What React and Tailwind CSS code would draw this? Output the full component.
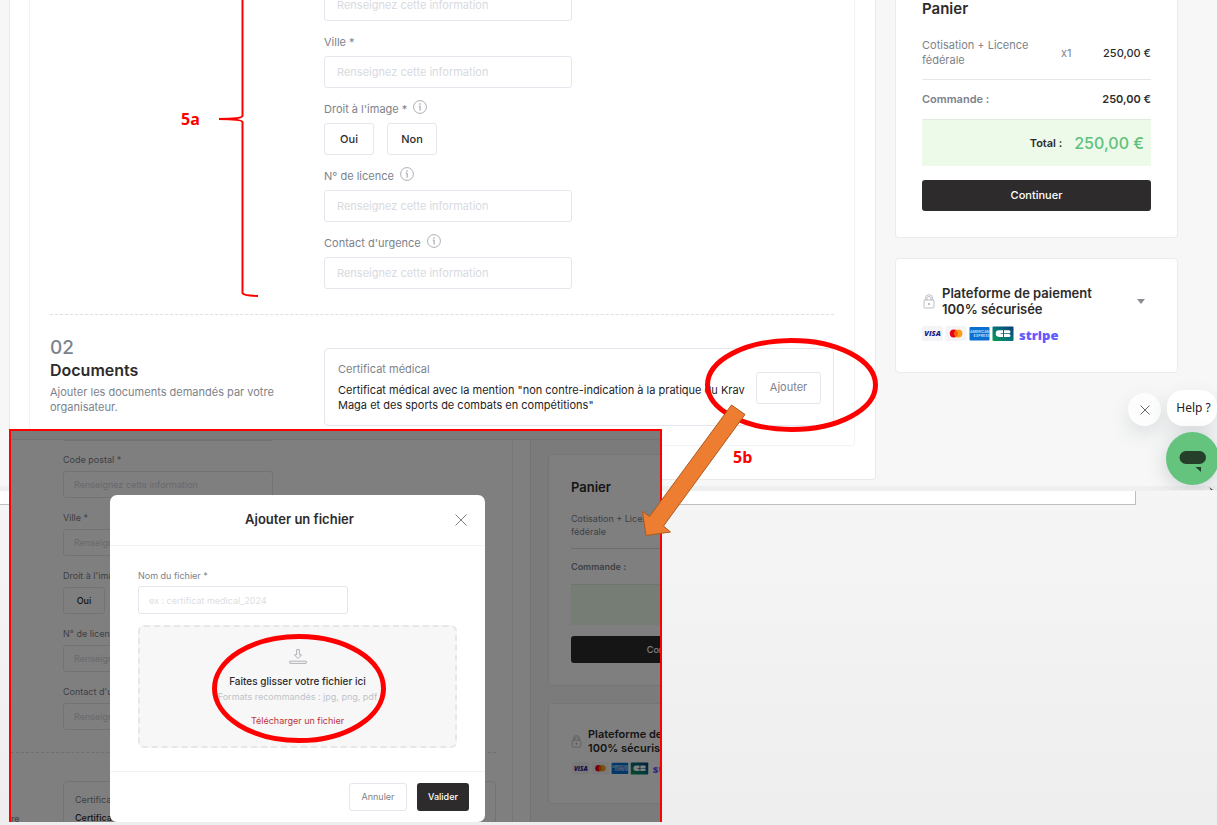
import { useId } from 'react';

const INFO = 'Renseignez cette information';

function InfoIcon() {
  return (
    <svg viewBox="0 0 14 14" className="mb-1 h-[14px] w-[14px] text-[#979ba3]" fill="none" stroke="currentColor" aria-hidden="true">
      <circle cx="7" cy="7" r="6.4" strokeWidth="0.8" />
      <path d="M5.8 6.1h1.3V10.600" strokeWidth="1" />
      <circle cx="7" cy="4" r="0.5" fill="currentColor" strokeWidth="0.4" />
    </svg>
  );
}

function LockIcon({ className }) {
  return (
    <svg viewBox="0 0 12 15" className={className} fill="none" stroke="#aaadb4" strokeWidth="0.8" aria-hidden="true">
      <path d="M2.4 6V4.3a3.6 3.6 0 0 1 7.2 0V6M4 6V4.5a2 2 0 0 1 4 0V6" />
      <rect x="1" y="6" width="10" height="8" rx="1" />
      <circle cx="6" cy="10" r="0.7" fill="#9b9fa6" />
    </svg>
  );
}

function PaymentLogos({ className }) {
  return (
    <svg viewBox="0 0 144 18" className={className} role="img" aria-label="Visa, Mastercard, American Express, CB, Stripe">
      <defs>
        <linearGradient id="cb" x1="0" x2="1" y1="1" y2="0">
          <stop offset="0" stopColor="#0a9a50" />
          <stop offset="0.5" stopColor="#04707c" />
          <stop offset="1" stopColor="#073c72" />
        </linearGradient>
      </defs>
      <rect x="0" y="0" width="21" height="15" rx="2" fill="#f4f4f6" />
      <text x="10.5" y="10.2" textAnchor="middle" fontFamily="Open Sans, sans-serif" fontSize="7.500" fontWeight="800" fontStyle="italic" fill="#1a1f87">VISA</text>
      <rect x="23.5" y="0" width="21" height="15" rx="2" fill="#f4f4f6" />
      <circle cx="31.8" cy="7.5" r="4" fill="#eb001b" />
      <circle cx="36.4" cy="7.5" r="4" fill="#f79e1b" />
      <path d="M34.1 4.2a4 4 0 0 1 0 6.6a4 4 0 0 1 0-6.6" fill="#ff5f00" />
      <rect x="47.5" y="1" width="20" height="13.5" rx="1" fill="#0a6fd0" />
      <text x="48" y="7" fontFamily="Inter, sans-serif" fontSize="3.6" fontWeight="700" fill="#b9d8f6">AMERICAN</text>
      <text x="51.5" y="11" fontFamily="Inter, sans-serif" fontSize="3.6" fontWeight="700" fill="#b9d8f6">EXPRESS</text>
      <rect x="70.5" y="0.5" width="21" height="14.5" rx="1" fill="url(#cb)" />
      <path d="M81 4.300h-4a3.300 3.300 0 0 0 0 6.600H81V8.100h-2.500v-.9h2.500zM82 4.300h5a1.500 1.500 0 0 1 0 3h-5zM82 7.900h5a1.500 1.500 0 0 1 0 3h-5z" fill="#fff" />
      <text x="97" y="13.5" fontFamily="Open Sans, sans-serif" fontSize="13" fontWeight="800" fill="#635bff">stripe</text>
    </svg>
  );
}

function Field({ label, info, small }) {
  const id = useId();
  return (
    <div>
      <div className={small ? 'flex h-[31px] items-center pt-[9px]' : 'flex h-[35px] items-center gap-[6px] pt-[7px]'}>
        <label htmlFor={id} className="text-[#7d828b]">{label}</label>
        {info && <InfoIcon />}
      </div>
      <input
        id={id}
        placeholder={INFO}
        className={
          small
            ? 'block h-[27px] w-[210px] rounded-[3px] border border-[#e4e6ed] bg-white px-[10px] placeholder:text-[#cfd2da]'
            : 'block h-8 w-[248px] rounded-[3px] border border-[#e4e6ed] bg-white px-3 placeholder:text-[#d8dae1]'
        }
      />
    </div>
  );
}

function ImageRights({ small }) {
  const button = small
    ? 'h-[27px] w-[42px] rounded-[3px] border border-[#e4e6ed] bg-white font-medium text-[#2d2b2c]'
    : 'h-8 w-[50px] rounded-[3px] border border-[#e4e6ed] bg-white font-medium text-[#2d2b2c]';
  return (
    <div>
      <div className={small ? 'flex h-[31px] items-center pt-[9px]' : 'flex h-[35px] items-center gap-[6px] pt-[7px]'}>
        <span className="text-[#7d828b]">Droit à l'image *</span>
        {!small && <InfoIcon />}
      </div>
      <div className="flex gap-[13px]">
        <button className={button}>Oui</button>
        <button className={button}>Non</button>
      </div>
    </div>
  );
}

function RegistrationForm() {
  return (
    <main className="min-w-0 flex-1 rounded-b border-r border-b border-l border-[#e9eaed] bg-white pr-5 pb-[33px] pl-[19px]">
      <div className="rounded-b border-x border-b border-[#f3f3f5] px-5 pb-[19px]">
        <div className="flex">
          <div className="w-[274px] shrink-0" />
          <div className="-mt-[46px]">
            <Field label="Code postal *" />
            <Field label="Ville *" />
            <ImageRights />
            <Field label="N° de licence" info />
            <Field label="Contact d'urgence" info />
          </div>
        </div>
        <div className="mt-[25px] border-t border-dashed border-[#dddfe3]" />
        <section className="flex pt-[21px]">
          <div className="w-[274px] shrink-0 pr-4">
            <p className="text-[19px] leading-[24px] font-medium text-[#7d828b]">02</p>
            <h2 className="text-base leading-5 font-semibold text-[#2d2b2c]">Documents</h2>
            <p className="mt-[5px] leading-[15px] text-[#7d828b]">Ajouter les documents demandés par votre organisateur.</p>
          </div>
          <div className="mt-3 flex min-w-0 flex-1 items-center justify-between gap-2 rounded border border-[#e4e6ed] pt-[13px] pr-3 pb-3 pl-[13px]">
            <div>
              <h3 className="leading-[15px] text-[#7d828b]">Certificat médical</h3>
              <p className="mt-[6px] leading-[15px] text-[#1f1d1e]">
                Certificat médical avec la mention "non contre-indication à la pratique du Krav Maga et des sports de combats en compétitions"
              </p>
            </div>
            <button className="h-8 w-[65px] shrink-0 rounded-[3px] border border-[#e4e6ed] text-[#7d828b]">Ajouter</button>
          </div>
        </section>
      </div>
    </main>
  );
}

function Cart() {
  return (
    <aside className="flex w-[283px] shrink-0 flex-col gap-5">
      <section className="rounded-b border-x border-b border-[#ebebed] bg-white px-[26px] pb-[26px]">
        <h2 className="text-[15px] leading-[18px] font-semibold text-[#2d2b2c]">Panier</h2>
        <div className="mt-5 flex items-center border-b border-[#e6e7ea] pb-[11px]">
          <span className="w-[139px] pr-4 leading-[15px] text-[#7d828b]">Cotisation + Licence fédérale</span>
          <span className="text-[#7d828b]">x1</span>
          <span className="ml-auto font-medium text-[#2d2b2c]">250,00 €</span>
        </div>
        <div className="flex h-[39px] items-center justify-between font-semibold">
          <span className="text-[#7d828b]">Commande :</span>
          <span className="text-[#2d2b2c]">250,00 €</span>
        </div>
        <div className="flex h-[47px] items-center justify-end gap-3 border-t border-[#e1ebe0] bg-[#edfae9] pr-[7px]">
          <span className="font-semibold text-[#2d2b2c]">Total :</span>
          <span className="text-base font-medium text-[#62c07b]">250,00 €</span>
        </div>
        <button className="mt-[14px] h-[31px] w-full rounded-[3px] bg-[#2d2b2c] font-medium text-white">Continuer</button>
      </section>
      <section className="rounded border border-[#ebebed] bg-white px-[26px] pt-[26px] pb-7">
        <div className="flex items-center">
          <LockIcon className="ml-[1px] h-[15px] w-3" />
          <h2 className="ml-[7px] flex-1 text-[13px] leading-4 font-semibold text-[#2d2b2c]">Plateforme de paiement 100% sécurisée</h2>
          <button aria-label="Afficher les détails" className="mr-[6px] ml-6">
            <svg viewBox="0 0 8 5" className="h-[5px] w-2"><path d="M0 0h8L4 5z" fill="#888c93" /></svg>
          </button>
        </div>
        <PaymentLogos className="mt-[9px] h-[18px] w-[144px]" />
      </section>
    </aside>
  );
}

function UploadDialog() {
  return (
    <div role="dialog" aria-label="Ajouter un fichier" className="absolute top-[64px] left-[99px] w-[375px] rounded-[7px] bg-white">
      <header className="relative flex h-[51px] items-center justify-center border-b border-[#f3f3f5] pl-1">
        <h2 className="text-[13px] font-semibold text-[#2d2b2c]">Ajouter un fichier</h2>
        <button aria-label="Fermer" className="absolute right-[18px]">
          <svg viewBox="0 0 12 12" className="h-3 w-3" stroke="#7b7f86" fill="none"><path d="M.5.5l11 11M11.5.5l-11 11" /></svg>
        </button>
      </header>
      <div className="px-7 py-[23px]">
        <label htmlFor="file-name" className="block leading-[14px] text-[#7d828b]">Nom du fichier *</label>
        <input id="file-name" placeholder="ex : certificat medical_2024" className="mt-[3px] block h-7 w-[210px] rounded-[3px] border border-[#e4e6ed] px-[10px] placeholder:text-[#dcdee4]" />
        <div className="mt-[11px] flex h-[123px] flex-col items-center rounded-md border-2 border-dashed border-[#e6e7ea] bg-[#f7f7f7] pt-[22px]">
          <svg viewBox="0 0 18 15" className="h-[15px] w-[18px]" fill="none" stroke="#a8acb2" strokeWidth="0.9" aria-hidden="true">
            <path d="M7.6.6h2.8v5.2h2.2L9 9.6 5.400 5.800h2.200z" />
            <rect x=".6" y="12.200" width="16.800" height="2.200" rx=".5" />
          </svg>
          <p className="mt-[9px] text-[10px] leading-4 font-medium text-[#2d2b2c]">Faites glisser votre fichier ici</p>
          <p className="leading-4 text-[#bfc3ca]">Formats recommandés : jpg, png, pdf</p>
          <button className="mt-2 leading-4 text-[#bd3337]">Télécharger un fichier</button>
        </div>
      </div>
      <footer className="flex h-[51px] items-center justify-end gap-[10px] border-t border-[#f3f3f5] pr-4">
        <button className="h-7 w-[58px] rounded-[3px] border border-[#e4e6ed] text-[#7d828b]">Annuler</button>
        <button className="h-7 w-[52px] rounded-[3px] bg-[#2d2b2c] font-medium text-white">Valider</button>
      </footer>
    </div>
  );
}

function UploadPreview() {
  return (
    <section className="absolute top-[429px] left-[9px] h-[393px] w-[653px] overflow-hidden border-x-2 border-t-2 border-[#fe0000] bg-[#f7f7f7] text-[9px]">
      <div className="h-[9px] border-b border-[#e9e9eb] bg-[#f7f7f7]" />
      <div className="flex">
        <div className="w-[520px] shrink-0 border-r border-[#e6e6e9] bg-white pr-[17px]">
          <div className="h-[400px] border-r border-[#eeeef0] pr-4">
            <div className="pl-[52px]">
              <div className="-mb-[1px] h-[1px] w-[210px] bg-[#e4e6ed]" />
              <Field small label="Code postal *" />
              <Field small label="Ville *" />
              <ImageRights small />
              <Field small label="N° de licence" />
              <Field small label="Contact d'urgence" />
            </div>
            <div className="mt-[22px] border-t border-dashed border-[#dddfe3]" />
            <div className="flex items-start pt-7">
              <p className="w-[52px] pt-[31px] text-[#7d828b]">re</p>
              <div className="flex-1 rounded border border-[#e4e6ed] px-[11px] pt-3">
                <h3 className="leading-3 text-[#7d828b]">Certificat médical</h3>
                <p className="mt-[6px] leading-3 font-medium text-[#2d2b2c]">Certificat médical</p>
              </div>
            </div>
          </div>
        </div>
        <div className="ml-[17px] w-[240px] shrink-0 pt-[14px]">
          <section className="rounded border border-[#ebebed] bg-white px-[22px] pb-[22px]">
            <h2 className="pt-[23px] text-[13px] leading-[18px] font-semibold text-[#2d2b2c]">Panier</h2>
            <p className="mt-4 w-[100px] leading-[13px] text-[#7d828b]">Cotisation + Licence fédérale</p>
            <div className="mt-[10px] border-t border-[#dcdde0]" />
            <p className="flex h-[35px] items-center font-semibold text-[#7d828b]">Commande :</p>
            <div className="h-[41px] border-t border-[#e1ebe0] bg-[#edfae9]" />
            <button className="mt-[11px] h-[27px] w-full rounded-[3px] bg-[#2d2b2c] font-medium text-white">Continuer</button>
          </section>
          <section className="mt-[17px] h-[101px] rounded border border-[#ebebed] bg-white px-[22px] pt-[23px]">
            <div className="flex items-center">
              <LockIcon className="h-[13px] w-[11px]" />
              <h2 className="ml-[6px] w-[140px] text-[11px] leading-[14px] font-semibold text-[#2d2b2c]">Plateforme de paiement 100% sécurisée</h2>
            </div>
            <PaymentLogos className="mt-[7px] h-[15px] w-[122px]" />
          </section>
        </div>
      </div>
      <div className="absolute inset-0 bg-black/50" />
      <UploadDialog />
    </section>
  );
}

function HelpWidget() {
  return (
    <div className="absolute top-0 right-0 h-[490px] w-[120px] overflow-hidden">
      <button aria-label="Masquer" className="absolute top-[393px] right-[56px] flex h-[33px] w-[33px] items-center justify-center rounded-full bg-[#fdfdfd] shadow-[0_8px_20px_rgba(60,85,90,0.14)]">
        <svg viewBox="0 0 10 10" className="h-[10px] w-[10px]" stroke="#63666c" fill="none"><path d="M.5.5l9 9M9.500.5l-9 9" /></svg>
      </button>
      <button className="absolute top-[390px] right-0 h-9 w-[50px] rounded-[16px] bg-white pl-[3px] font-['Noto_Sans',sans-serif] text-[12px] text-[#1f2022] shadow-[0_8px_20px_rgba(60,85,90,0.14)]">Help ?</button>
      <button aria-label="Ouvrir la messagerie" className="absolute top-[432px] -right-[2px] h-[53px] w-[53px] rounded-full bg-[#64c37c] shadow-[0_4px_20px_rgba(60,75,90,0.22)]">
        <svg viewBox="0 0 53 53" className="h-[53px] w-[53px]"><rect x="13.500" y="19" width="26.500" height="13" rx="6.500" fill="#253f2b" /><path d="M29.500 35h5.500v5z" fill="#253f2b" /></svg>
      </button>
      <svg viewBox="0 0 4 3" className="absolute right-1 bottom-0 h-[3px] w-1"><path d="M0 0l4 3H2z" fill="#333" /></svg>
    </div>
  );
}

function Annotations() {
  return (
    <div className="pointer-events-none absolute top-0 left-0 font-['Open_Sans',sans-serif] text-base font-bold text-[#fe0000]">
      <svg width="900" height="825" viewBox="0 0 900 825" fill="none" stroke="#fe0000" aria-hidden="true">
        <path d="M242.500 0V116Q242 118.700 219 119Q242 119.300 242.500 122V293Q243 295.700 258 296" strokeWidth="2" />
        <ellipse cx="791.500" cy="385" rx="84" ry="44.500" strokeWidth="5" />
        <ellipse cx="299" cy="688.500" rx="84.500" ry="52" strokeWidth="5" />
        <path d="M731.500 405L745 414.500L663.500 526L670.500 532L646 535.500L642.500 511.500L649.500 516.500Z" fill="#ed7d31" stroke="#ae5a21" />
      </svg>
      <span className="absolute top-[107px] left-[181px]">5a</span>
      <span className="absolute top-[445px] left-[733px]">5b</span>
    </div>
  );
}

export default function App() {
  return (
    <div className="relative flex min-h-screen flex-col overflow-hidden font-[Inter,sans-serif] text-[11px] text-[#2d2b2c]">
      <div className="border-b-[5px] border-[#efefef] bg-[#f7f7f7]">
        <div className="flex items-start gap-[19px] overflow-hidden pr-[39px] pb-[6px] pl-[9px]">
          <RegistrationForm />
          <Cart />
        </div>
      </div>
      <div className="flex-1 bg-linear-to-b from-[#f5f5f5] to-[#eeeeee] pb-[300px]">
        <div className="mr-[81px] h-[14px] border-r border-b border-[#bdbfc1] bg-white" />
      </div>
      <UploadPreview />
      <HelpWidget />
      <Annotations />
    </div>
  );
}
